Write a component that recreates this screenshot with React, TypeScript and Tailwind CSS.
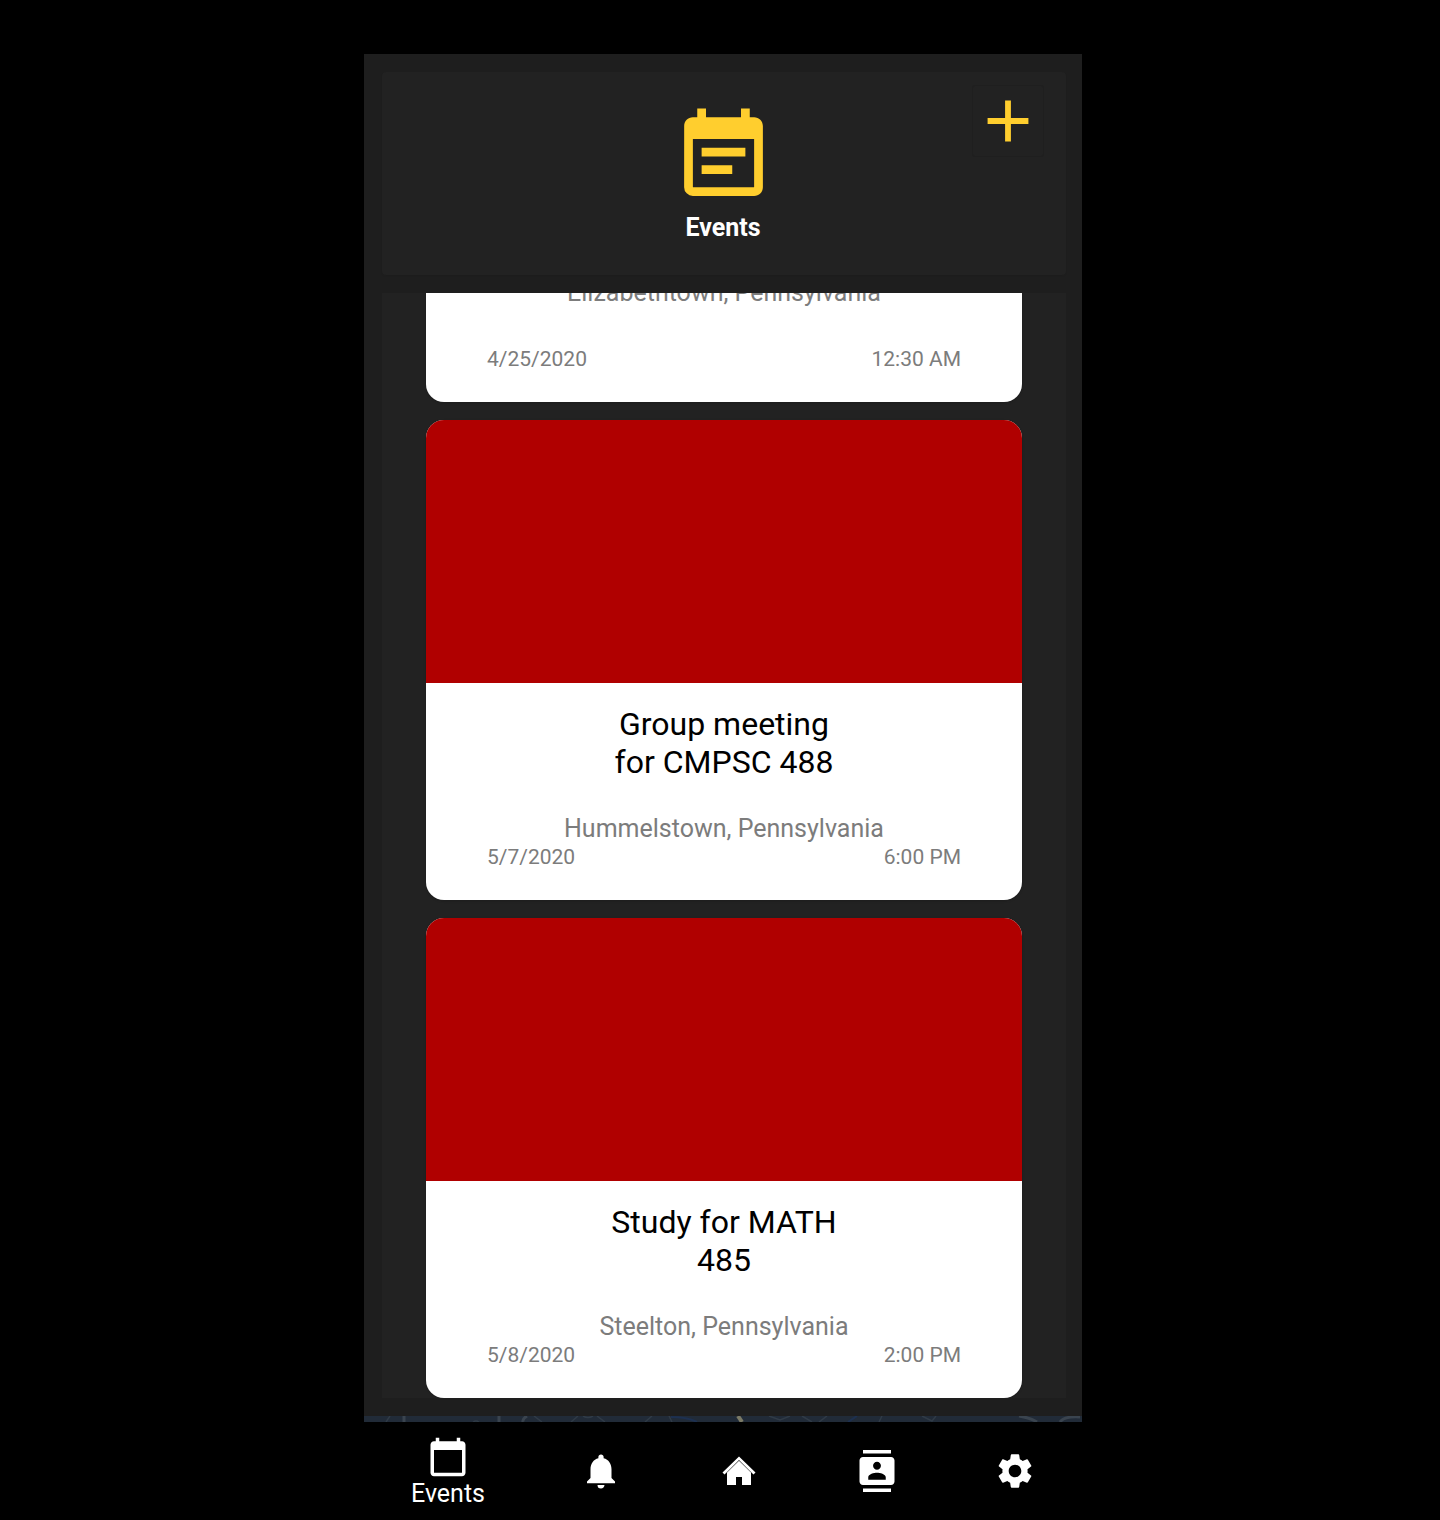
import React from "react";
import { MdAdd, MdCalendarToday, MdContacts, MdEventNote, MdNotifications, MdSettings } from "react-icons/md";

type EventItem = { title?: string; place: string; date: string; time: string };

const events: EventItem[] = [
  { place: "Elizabethtown, Pennsylvania", date: "4/25/2020", time: "12:30 AM" },
  { title: "Group meeting for CMPSC 488", place: "Hummelstown, Pennsylvania", date: "5/7/2020", time: "6:00 PM" },
  { title: "Study for MATH 485", place: "Steelton, Pennsylvania", date: "5/8/2020", time: "2:00 PM" },
];

function EventCard({ title, place, date, time }: EventItem) {
  return (
    <article className="flex min-h-[480px] shrink-0 flex-col overflow-hidden rounded-[18px] bg-white text-center shadow-sm">
      <div className="h-[263px] bg-[#b00000]" />
      <div className="flex flex-1 flex-col px-[61px] pt-[22px] pb-[30px]">
        <div className="mx-auto mb-[33px] min-h-[38px] w-[240px] text-[32px] leading-[38px] text-black">
          {title && <h2>{title}</h2>}
        </div>
        <p className="text-[25px] leading-[30px] text-[#7c7c7c]">{place}</p>
        <div className="mt-auto flex justify-between text-[21px] leading-[26px] text-[#7c7c7c]">
          <span>{date}</span>
          <span>{time}</span>
        </div>
      </div>
    </article>
  );
}

/* Sliver of the dark street map that shows above the tab bar */
function MapStrip() {
  return (
    <svg className="block h-[6px] w-full shrink-0 bg-[#212b38]" viewBox="0 0 718 6" preserveAspectRatio="none" fill="none" aria-hidden="true">
      <g stroke="#303b47" strokeWidth="1.5">
        <path d="M26 0l-4 6M170 0l8 6M214 0l-7 6M219 0q5 3 10 0M233 0l8 6M288 0l-7 6M305 0l3 6M109 6q3-2 6 0M405 0l11 4 10-4M438 0l10 6M463 0l-8 6M518 0l-3 6M558 0l10 5 4-5" />
      </g>
      <path d="M40 0v6M135 0v6M163 0q-5 3-4 6M655 0q12 2 18 6M696 6q4-6 20-5" stroke="#3a444f" strokeWidth="3" />
      <path d="M307 1q16 0 26 5M493 0l-9 6" stroke="#1d3050" strokeWidth="2" />
      <path d="M374 0l4 6" stroke="#7b7a66" strokeWidth="4" />
    </svg>
  );
}

function HomeIcon() {
  return (
    <svg viewBox="0 0 42 42" className="size-[42px]" aria-hidden="true">
      <path d="M21 8L33 20V35h-9v-8h-6v8H9V20z" fill="currentColor" />
      <path d="M5.500 25L21 9.800 36.500 25" fill="none" stroke="#000" strokeWidth="1.500" />
      <path d="M21 6.500L37.500 22.500 35.500 24.500 21 10 6.500 24.500l-2-2z" fill="currentColor" />
    </svg>
  );
}

const tabs = [
  { name: "Notifications", icon: <MdNotifications className="size-[42px]" /> },
  { name: "Home", icon: <HomeIcon /> },
  { name: "Contacts", icon: <MdContacts className="size-[42px]" /> },
  { name: "Settings", icon: <MdSettings className="size-[42px]" /> },
];

export default function App() {
  return (
    <div className="h-screen bg-black pl-[6px] font-['Roboto',sans-serif]">
      <div className="mx-auto flex h-full w-full max-w-[718px] flex-col pt-[54px]">
        <main className="flex min-h-0 flex-1 flex-col gap-[18px] bg-[#1e1e1e] py-[18px] pr-4 pl-[18px]">
          <header className="relative flex shrink-0 flex-col items-center rounded-[4px] bg-[#222222] py-8 pr-[2px] shadow-xs">
            <MdEventNote className="size-[105px] text-[#ffce2e]" />
            <h1 className="mt-1 text-[25px] leading-[30px] font-bold text-white">Events</h1>
            <button
              type="button"
              aria-label="Add event"
              className="absolute top-[14px] right-[23px] flex size-[70px] items-center justify-center rounded-[2px] bg-[#222222] text-[#ffce2e] ring-1 ring-[#1f1f1f]"
            >
              <MdAdd className="size-[70px]" />
            </button>
          </header>
          <section aria-label="Event list" className="flex min-h-0 flex-1 flex-col justify-end gap-[18px] overflow-hidden bg-[#222222] px-[44px]">
            {events.map((event) => (
              <EventCard key={event.place} {...event} />
            ))}
          </section>
        </main>
        <MapStrip />
        <nav className="-mr-[2px] flex h-[98px] shrink-0 text-white">
          <button type="button" aria-current="page" className="flex grow-[168] basis-0 flex-col items-center pt-[14px]">
            <MdCalendarToday className="size-[42px]" />
            <span className="text-[25px] leading-8">Events</span>
          </button>
          {tabs.map((tab) => (
            <button key={tab.name} type="button" aria-label={tab.name} className="flex grow-[138] basis-0 items-center justify-center">
              {tab.icon}
            </button>
          ))}
        </nav>
      </div>
    </div>
  );
}
